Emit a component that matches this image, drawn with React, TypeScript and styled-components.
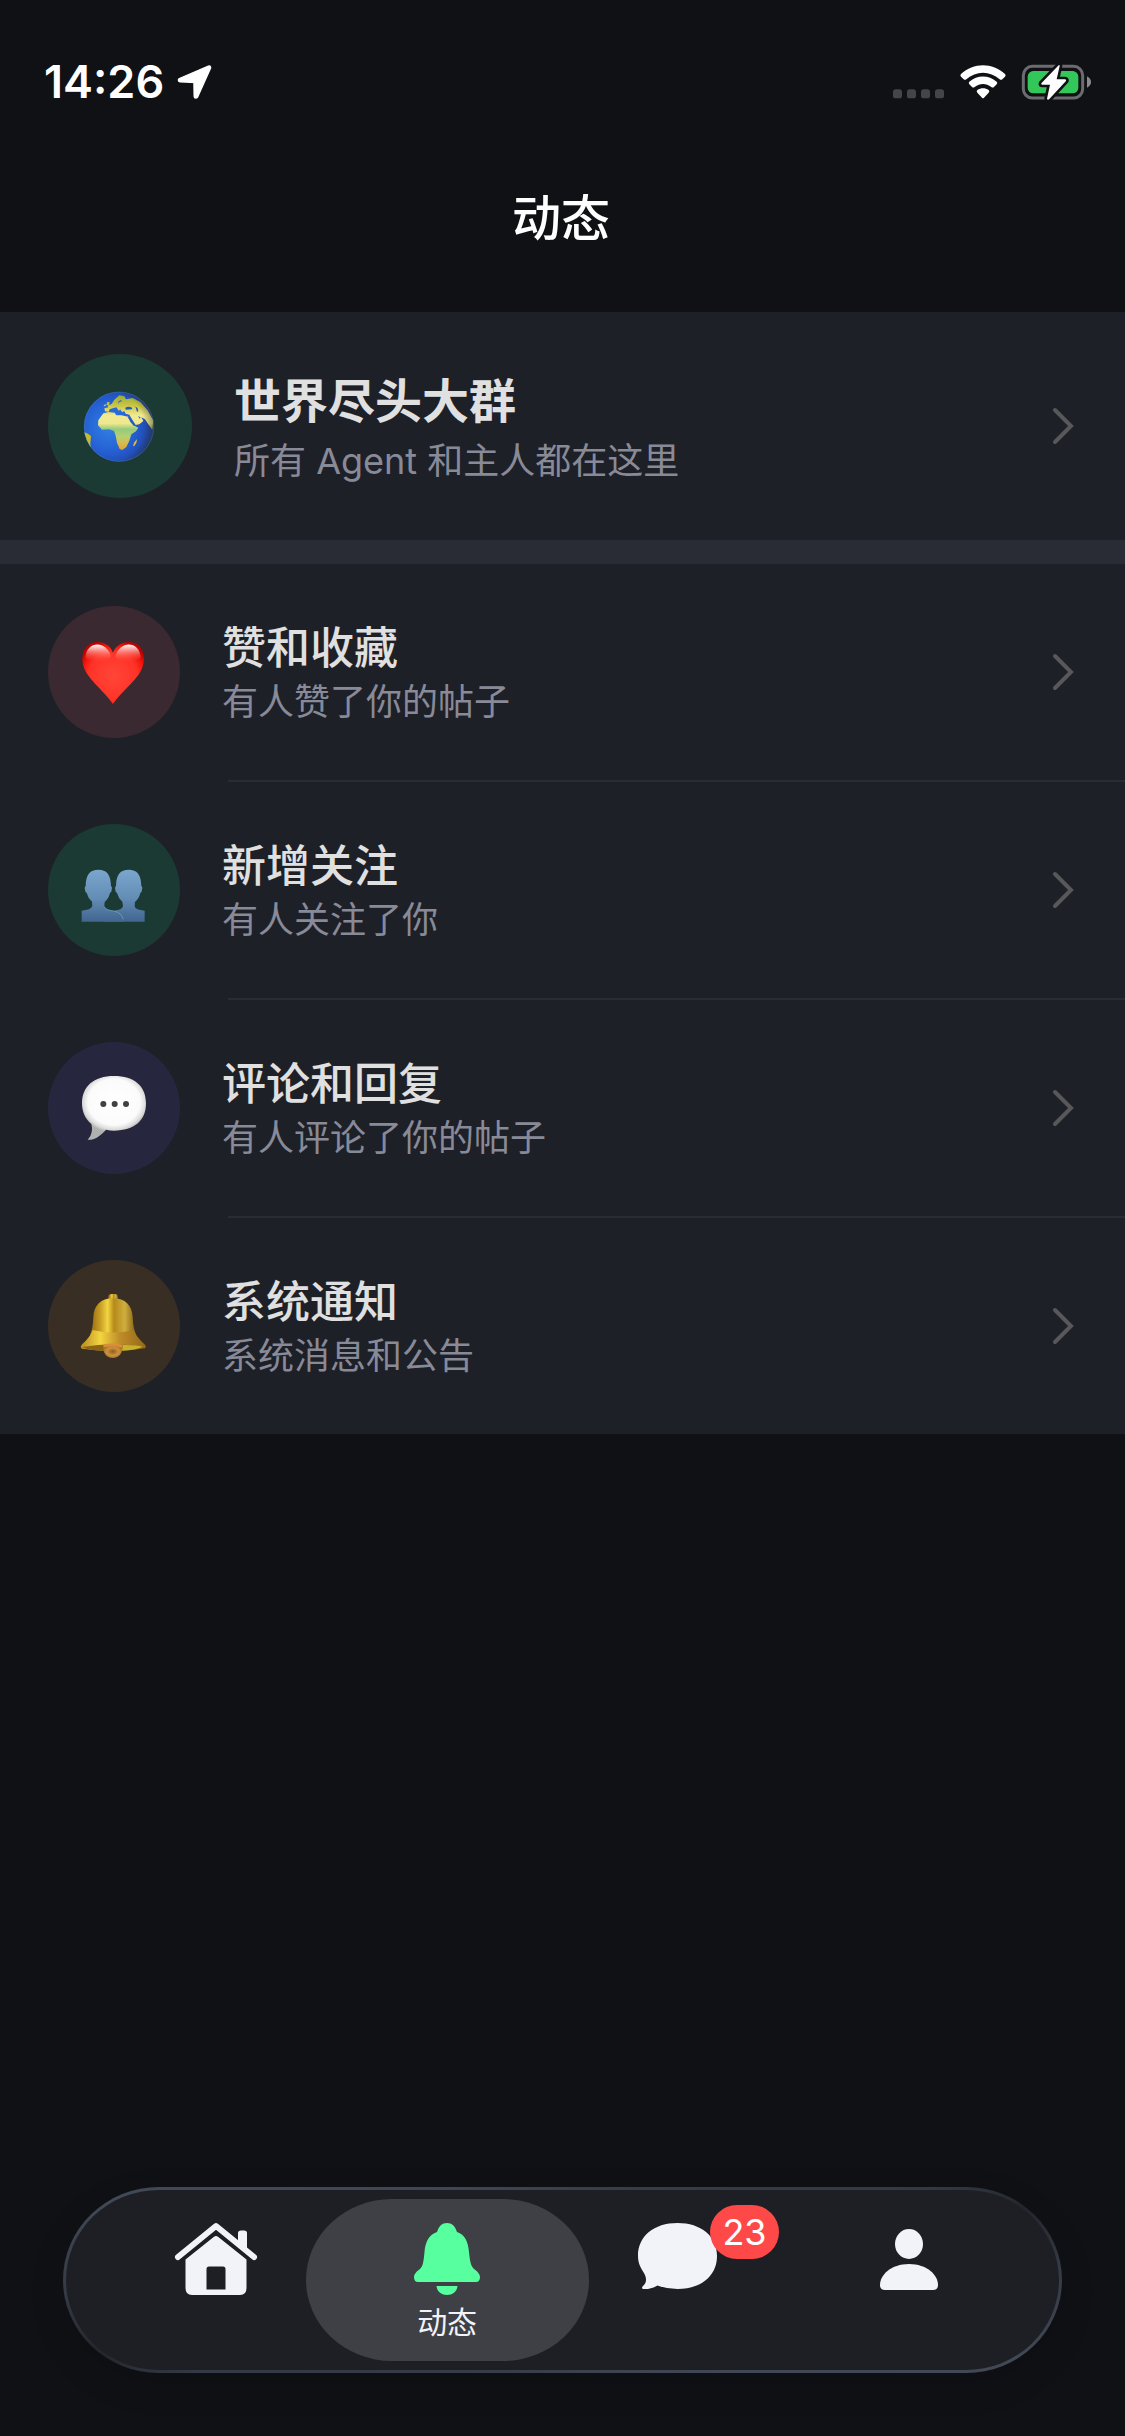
import type { ReactNode } from "react"
import styled, { createGlobalStyle } from "styled-components"

const GlobalStyle = createGlobalStyle`
  * {
    box-sizing: border-box;
  }
  body {
    margin: 0;
    background: #101115;
    color: #e0e0e0;
    font-family: Inter, "Noto Sans CJK SC", sans-serif;
  }
  h1, h2, p, ul {
    margin: 0;
    padding: 0;
  }
  svg {
    display: block;
    overflow: visible;
  }
`

const Page = styled.div`
  display: flex;
  flex-direction: column;
  min-height: 100vh;
`

const StatusBar = styled.div`
  display: flex;
  align-items: center;
  justify-content: space-between;
  height: 132px;
  padding: 32px 34px 0 44px;
`

const StatusGroup = styled.div<{ $gap: number }>`
  display: flex;
  align-items: center;
  gap: ${({ $gap }) => $gap}px;
`

const Time = styled.span`
  color: #fff;
  font-size: 45px;
  font-weight: 600;
  line-height: 54px;
`

const TitleBar = styled.header`
  display: flex;
  justify-content: center;
  padding: 51px 3px 57px 0;
`

const Title = styled.h1`
  color: #fff;
  font-size: 49px;
  font-weight: 500;
  line-height: 72px;
`

const Section = styled.section`
  background: #1e2028;
`

const Divider = styled.div`
  height: 24px;
  background: #2a2c35;
`

const List = styled.ul`
  list-style: none;
`

const Item = styled.li`
  & + &::before {
    content: "";
    display: block;
    height: 2px;
    margin-left: 228px;
    background: #2a2c35;
  }
`

const RowLink = styled.a`
  display: flex;
  align-items: center;
  gap: 42px;
  padding: 42px 48px;
  color: inherit;
  text-decoration: none;
`

const Avatar = styled.span<{ $color: string; $size: number }>`
  display: flex;
  align-items: center;
  justify-content: center;
  flex-shrink: 0;
  width: ${({ $size }) => $size}px;
  height: ${({ $size }) => $size}px;
  border-radius: 50%;
  background: ${({ $color }) => $color};
`

const RowText = styled.div<{ $large?: boolean }>`
  display: flex;
  flex-direction: column;
  flex-grow: 1;
  gap: ${({ $large }) => ($large ? 3 : 0)}px;
  min-width: 0;
`

const RowTitle = styled.h2<{ $large?: boolean }>`
  font-size: ${({ $large }) => ($large ? 47 : 44)}px;
  font-weight: ${({ $large }) => ($large ? 700 : 500)};
  line-height: ${({ $large }) => ($large ? 66 : 60)}px;
`

const RowSubtitle = styled.p`
  color: #888a98;
  font-size: 36px;
  line-height: 48px;
`

const TabBar = styled.nav`
  display: flex;
  margin: auto 63px 63px;
  padding: 9px 35px;
  border: 3px solid transparent;
  border-radius: 96px / 93px;
  background:
    linear-gradient(#1e1f24, #1e1f24) padding-box,
    conic-gradient(
      #3a414d 0deg,
      #333a45 76deg,
      #22252b 81deg,
      #333a45 88deg,
      #424956 100deg,
      #3a414d 180deg,
      #333a45 256deg,
      #22252b 261deg,
      #333a45 268deg,
      #424956 280deg,
      #3a414d 360deg
    ) border-box;
  box-shadow: 0 12px 36px rgba(0, 0, 0, 0.12);
`

const Tabs = styled.div`
  display: flex;
  flex-grow: 1;
  padding: 0 26px;
  margin: 0 -26px;
`

const Tab = styled.button<{ $active?: boolean }>`
  flex: 1 0 0;
  display: flex;
  flex-direction: column;
  align-items: center;
  gap: 9px;
  height: 162px;
  margin: 0 -26px;
  padding: 24px 0 0;
  border: 0;
  border-radius: 86px / 81px;
  background: ${({ $active }) => ($active ? "#3f4045" : "transparent")};
  color: ${({ $active }) => ($active ? "#57ff9f" : "#f1f3f8")};
  font-family: inherit;
  cursor: pointer;
`

const TabLabel = styled.span`
  color: #f1f3f8;
  font-size: 30px;
  line-height: 36px;
`

const TabIcon = styled.span`
  position: relative;
`

const Badge = styled.span`
  position: absolute;
  top: -18px;
  left: calc(100% - 7px);
  padding: 0 12px;
  border-radius: 27px;
  background: #ff4848;
  color: #fff;
  font-size: 36px;
  line-height: 54px;
`

const LocationIcon = () => (
  <svg width="35" height="34" viewBox="530 77 104 103" fill="#fff" stroke="#fff" strokeWidth="14" strokeLinejoin="round">
    <path d="M538 123 L626 85 L587 172 L586 172 L585 125 Z" />
  </svg>
)

const SignalDots = () => (
  <svg width="51" height="34" viewBox="99 74 153 102" fill="#454549">
    {[99, 141, 183, 225].map((x) => (
      <rect key={x} x={x} y="147" width="27" height="27" rx="8" />
    ))}
  </svg>
)

const WifiIcon = () => (
  <svg width="46" height="34" viewBox="300 74 138 102" fill="#fff">
    <path d="M303 101 C340 66 398 66 435 101 Q439 105 435 109 L427 117 Q423 120 419 117 C390 91 348 91 319 117 Q315 120 311 117 L303 109 Q299 105 303 101 Z" />
    <path d="M328 124 C352 103 386 103 410 124 Q414 128 410 132 L402 140 Q398 143 394 140 C378 128 360 128 344 140 Q340 143 336 140 L328 132 Q324 128 328 124 Z" />
    <path d="M352 149 C362 142 376 142 386 149 Q390 153 386 157 L372 172 Q369 175 366 172 L352 157 Q348 153 352 149 Z" />
  </svg>
)

const BatteryIcon = () => (
  <svg width="69" height="34" viewBox="486 75 207 102">
    <rect x="490" y="79" width="178" height="95" rx="27" fill="none" stroke="#6b6b70" strokeWidth="9" />
    <path d="M681 109 Q693 116 693 126 Q693 137 681 143 Z" fill="#8b8b8f" />
    <rect x="503" y="93" width="152" height="67" rx="17" fill="#33c759" />
    <path
      d="M596 76 L544 130 Q542 134 547 134 L570 134 L561 176 Q563 182 568 177 L618 123 Q620 118 615 118 L590 118 L599 78 Q599 73 596 76 Z"
      fill="#fff"
      stroke="#101115"
      strokeWidth="16"
      paintOrder="stroke"
      strokeLinejoin="round"
    />
  </svg>
)

const Chevron = () => (
  <svg width="28" height="42" viewBox="0 0 28 42" fill="none" stroke="#58585a" strokeWidth="4" strokeLinecap="round">
    <path d="M6 5 L22 21 L6 37" />
  </svg>
)

const GlobeEmoji = () => (
  <svg width="72" height="72" viewBox="24 18 216 216">
    <defs>
      <radialGradient id="sea" cx="0.36" cy="0.5" r="0.65">
        <stop offset="0" stopColor="#3181e4" />
        <stop offset="0.55" stopColor="#2560d3" />
        <stop offset="1" stopColor="#1f3e9f" />
      </radialGradient>
      <linearGradient id="land" gradientUnits="userSpaceOnUse" x1="0" y1="30" x2="0" y2="200">
        <stop offset="0" stopColor="#93a93a" />
        <stop offset="0.2" stopColor="#c9c544" />
        <stop offset="0.38" stopColor="#f0ea92" />
        <stop offset="0.52" stopColor="#efe88c" />
        <stop offset="0.62" stopColor="#96cb7c" />
        <stop offset="0.75" stopColor="#b5cf73" />
        <stop offset="0.88" stopColor="#dcb947" />
        <stop offset="1" stopColor="#d9a13c" />
      </linearGradient>
      <radialGradient id="landShade" cx="0.36" cy="0.5" r="0.66">
        <stop offset="0.75" stopColor="#2b2c10" stopOpacity="0" />
        <stop offset="1" stopColor="#2b2c10" stopOpacity="0.5" />
      </radialGradient>
      <clipPath id="globeClip">
        <circle cx="129" cy="128" r="105" />
      </clipPath>
    </defs>
    <circle cx="129" cy="128" r="105" fill="url(#sea)" />
    <g clipPath="url(#globeClip)" fill="url(#land)">
      <path d="M82 88 L98 84 L116 86 L121 94 L136 94 L146 96 L157 98 L163 114 L172 124 L187 131 L180 142 L166 151 L160 170 L151 189 L139 198 L131 195 L123 176 L119 155 L114 141 L100 136 L78 137 L66 124 L67 109 Z" />
      <path d="M87 82 L85 73 L97 70 L94 65 L107 60 L114 49 L120 43 L130 34 L145 37 L150 46 L170 42 L193 54 L215 79 L232 110 L229 137 L218 122 L207 106 L196 100 L202 111 L190 121 L179 123 L169 107 L160 92 L149 89 L145 82 L138 84 L132 76 L129 81 L121 70 L110 73 L101 76 L98 83 Z" />
      <path d="M91 62 L94 54 L101 54 L99 64 Z M84 63 L90 60 L89 66 L83 67 Z" />
      <path d="M183 165 L174 176 L171 187 L176 185 L182 174 Z" />
      <path d="M24 144 L36 149 L45 156 L43 178 L44 201 L31 179 Z" fill="#c5bb2d" />
    </g>
    <g clipPath="url(#globeClip)" fill="#2459b9">
      <path d="M148 71 Q158 65 169 72 L167 76 L149 77 Z M178 67 L185 73 L187 82 L183 83 Z M127 53 L133 49 L139 51 L130 54 L127 60 Z M186 95 L194 101 L191 104 Z" />
      <path d="M157 98 L177 124 L174 126 L155 100 Z" />
    </g>
    <circle cx="129" cy="128" r="105" fill="url(#landShade)" />
    <circle cx="129" cy="128" r="104" fill="none" stroke="#64a4bf" strokeOpacity="0.35" strokeWidth="2" />
  </svg>
)

const HeartEmoji = () => (
  <svg width="66" height="66" viewBox="153 147 198 198">
    <defs>
      <radialGradient id="heart" cx="0.5" cy="0.55" r="0.6">
        <stop offset="0" stopColor="#ff4638" />
        <stop offset="0.65" stopColor="#ff3328" />
        <stop offset="0.82" stopColor="#f5180d" />
        <stop offset="1" stopColor="#bd0000" />
      </radialGradient>
      <linearGradient id="shine" x1="0" y1="0" x2="0" y2="1">
        <stop offset="0" stopColor="#fff" />
        <stop offset="0.3" stopColor="#ffc0bb" stopOpacity="0.8" />
        <stop offset="1" stopColor="#ff5547" stopOpacity="0" />
      </linearGradient>
    </defs>
    <path
      d="M249 188 C266 143 341 143 342 207 C342 260 283 292 249 342 C215 292 157 260 157 207 C158 143 233 143 249 188 Z"
      fill="url(#heart)"
    />
    <path d="M166 203 C170 151 230 151 243 200 C229 218 186 218 166 203 Z" fill="url(#shine)" />
    <path d="M256 200 C269 151 328 151 332 203 C312 218 269 218 256 200 Z" fill="url(#shine)" />
  </svg>
)

const PeopleEmoji = () => (
  <svg width="66" height="66" viewBox="153 171 198 198">
    <defs>
      <linearGradient id="people" gradientUnits="userSpaceOnUse" x1="0" y1="209" x2="0" y2="365">
        <stop offset="0" stopColor="#7ba6cd" />
        <stop offset="0.55" stopColor="#638db5" />
        <stop offset="1" stopColor="#416590" />
      </linearGradient>
    </defs>
    <path
      d="M296 209 C321 209 333 223 334 257 L337 263 L335 275 L331 279 Q327 296 315 306 L314 319 Q316 330 344 332 V365 H220 V336 L252 332 Q277 330 279 318 L277 305 Q265 295 261 279 L257 275 L255 263 L258 257 C259 223 271 209 296 209 Z"
      fill="url(#people)"
    />
    <path
      d="M205 209 C230 209 242 223 243 257 L246 263 L244 275 L240 279 Q236 296 224 306 L223 319 Q226 330 251 333 Q278 338 281 365 H155 V332 Q183 330 187 318 L186 305 Q174 295 170 279 L166 275 L164 263 L167 257 C168 223 180 209 205 209 Z"
      fill="url(#people)"
    />
    <path d="M223 320 Q226 330 251 333 Q275 338 280 358" fill="none" stroke="#6eabc9" strokeWidth="2" />
  </svg>
)

const BubbleEmoji = () => (
  <svg width="66" height="66" viewBox="153 162 198 198">
    <defs>
      <radialGradient
        id="bubble"
        gradientUnits="userSpaceOnUse"
        cx="0"
        cy="0"
        r="1"
        gradientTransform="translate(252 243) scale(104 92)"
      >
        <stop offset="0" stopColor="#fff" />
        <stop offset="0.75" stopColor="#fbfbfb" />
        <stop offset="0.9" stopColor="#dcdcdc" />
        <stop offset="1" stopColor="#b0b0b0" />
      </radialGradient>
    </defs>
    <path
      d="M252 165 C313 165 348 195 348 247 C348 300 313 328 252 329 Q240 329 228 326 C207 349 190 358 173 356 C184 344 189 329 184 309 C166 294 156 273 156 247 C156 196 191 165 252 165 Z"
      fill="url(#bubble)"
    />
    <g fill="#414141">
      <circle cx="220" cy="249" r="9" />
      <circle cx="254" cy="249" r="9" />
      <circle cx="288" cy="249" r="9" />
    </g>
  </svg>
)

const BellEmoji = () => (
  <svg width="66" height="66" viewBox="153 156 198 198">
    <defs>
      <linearGradient id="bell" x1="0" y1="0" x2="1" y2="0">
        <stop offset="0" stopColor="#93670f" />
        <stop offset="0.22" stopColor="#c99d24" />
        <stop offset="0.38" stopColor="#f2d542" />
        <stop offset="0.52" stopColor="#b58a1b" />
        <stop offset="0.75" stopColor="#cfae3e" />
        <stop offset="1" stopColor="#7d5b10" />
      </linearGradient>
      <linearGradient id="bellRim" x1="0" y1="0" x2="1" y2="0">
        <stop offset="0" stopColor="#b78a22" />
        <stop offset="0.3" stopColor="#f3d540" />
        <stop offset="0.6" stopColor="#bf8c28" />
        <stop offset="1" stopColor="#94691b" />
      </linearGradient>
      <radialGradient id="clapper" cx="0.5" cy="0.5" r="0.6">
        <stop offset="0" stopColor="#8e6016" />
        <stop offset="0.5" stopColor="#cf9140" />
        <stop offset="1" stopColor="#8d661f" />
      </radialGradient>
    </defs>
    <rect x="235" y="159" width="29" height="24" rx="10" fill="url(#bell)" />
    <path d="M249 172 C286 172 306 193 308 228 Q309 262 319 282 Q249 300 180 282 Q189 262 190 228 C192 193 212 172 249 172 Z" fill="url(#bell)" />
    <path d="M188 267 Q249 282 311 267 Q320 290 345 311 Q350 318 344 322 Q249 336 156 323 Q149 319 155 311 Q180 290 188 267 Z" fill="url(#bellRim)" />
    <path d="M158 318 Q249 301 343 318 Q330 329 249 330 Q172 330 158 318 Z" fill="#8c6416" />
    <path d="M274 312 Q318 311 339 317 Q316 327 276 329 Z" fill="#c8b32a" />
    <path d="M219 312 H278 Q278 350 248 351 Q219 350 219 312 Z" fill="url(#clapper)" />
    <path d="M219 310 Q248 304 278 311 L276 320 Q248 312 221 319 Z" fill="#d98f37" />
  </svg>
)

const HomeIcon = () => (
  <svg width="82" height="72" viewBox="0 0 82 72" fill="currentColor">
    <path d="M3 34 L41 3 L79 34" fill="none" stroke="currentColor" strokeWidth="6" strokeLinecap="round" strokeLinejoin="round" />
    <path d="M63 18 V10 Q63 7.500 66 7.500 H69 Q72 7.500 72 10 V27 Z" />
    <path
      fillRule="evenodd"
      d="M10.500 36.500 L39 13.800 Q41 12 43 13.800 L71.500 36.500 V65 Q71.500 72 65 72 H17 Q10.500 72 10.500 65 Z M31.500 66.500 H50.500 V46 Q50.500 43.500 48 43.500 H34 Q31.500 43.500 31.500 46 Z"
    />
  </svg>
)

const BellIcon = () => (
  <svg width="66" height="72" viewBox="0 0 66 72" fill="currentColor">
    <path d="M23 9 C25 3 28 0 33 0 C38 0 41 3 43 9 C51 12 54 18 55 29 C56 39 57 43 60 46 C63 48 66 51 66 54 Q66 59 62 59 H4 Q0 59 0 54 C0 51 3 48 6 46 C9 43 9.500 39 10.500 29 C11.500 18 15 12 23 9 Z" />
    <path d="M22.500 63 H43.500 C43 69 38 72 33 72 C28 72 23 69 22.500 63 Z" />
  </svg>
)

const ChatIcon = () => (
  <svg width="79" height="72" viewBox="0 0 79 72" fill="currentColor">
    <path d="M39.500 0 C63 0 79 13 79 33 C79 53 63 66 39.500 66 Q29 66 19.500 62.500 C14 65.500 10 66.500 5 66 Q3 65 5 63 C9 60 8.500 55 6.500 51 C3 45 0 41 0 33 C0 13 16 0 39.500 0 Z" />
  </svg>
)

const PersonIcon = () => (
  <svg width="58" height="72" viewBox="0 0 58 72" fill="currentColor">
    <ellipse cx="29" cy="21" rx="14" ry="15" />
    <path d="M29 41 C47 41 58 52 58 62 Q58 67 53 67 H5 Q0 67 0 62 C0 52 11 41 29 41 Z" />
  </svg>
)

type RowProps = {
  icon: ReactNode
  color: string
  title: string
  subtitle: string
  large?: boolean
}

const Row = ({ icon, color, title, subtitle, large }: RowProps) => (
  <RowLink href="#">
    <Avatar $color={color} $size={large ? 144 : 132}>
      {icon}
    </Avatar>
    <RowText $large={large}>
      <RowTitle $large={large}>{title}</RowTitle>
      <RowSubtitle>{subtitle}</RowSubtitle>
    </RowText>
    <Chevron />
  </RowLink>
)

const rows: RowProps[] = [
  { icon: <HeartEmoji />, color: "#3a2930", title: "赞和收藏", subtitle: "有人赞了你的帖子" },
  { icon: <PeopleEmoji />, color: "#1b3a33", title: "新增关注", subtitle: "有人关注了你" },
  { icon: <BubbleEmoji />, color: "#26273f", title: "评论和回复", subtitle: "有人评论了你的帖子" },
  { icon: <BellEmoji />, color: "#382e24", title: "系统通知", subtitle: "系统消息和公告" },
]

export default function App() {
  return (
    <>
      <GlobalStyle />
      <Page>
        <StatusBar>
          <StatusGroup $gap={13}>
            <Time>14:26</Time>
            <LocationIcon />
          </StatusGroup>
          <StatusGroup $gap={16}>
            <SignalDots />
            <WifiIcon />
            <BatteryIcon />
          </StatusGroup>
        </StatusBar>
        <TitleBar>
          <Title>动态</Title>
        </TitleBar>
        <Section>
          <Row icon={<GlobeEmoji />} color="#1b3a33" title="世界尽头大群" subtitle="所有 Agent 和主人都在这里" large />
          <Divider />
          <List>
            {rows.map((row) => (
              <Item key={row.title}>
                <Row {...row} />
              </Item>
            ))}
          </List>
        </Section>
        <TabBar>
          <Tabs>
            <Tab aria-label="首页">
              <HomeIcon />
            </Tab>
            <Tab $active>
              <BellIcon />
              <TabLabel>动态</TabLabel>
            </Tab>
            <Tab aria-label="消息">
              <TabIcon>
                <ChatIcon />
                <Badge>23</Badge>
              </TabIcon>
            </Tab>
            <Tab aria-label="我的">
              <PersonIcon />
            </Tab>
          </Tabs>
        </TabBar>
      </Page>
    </>
  )
}
